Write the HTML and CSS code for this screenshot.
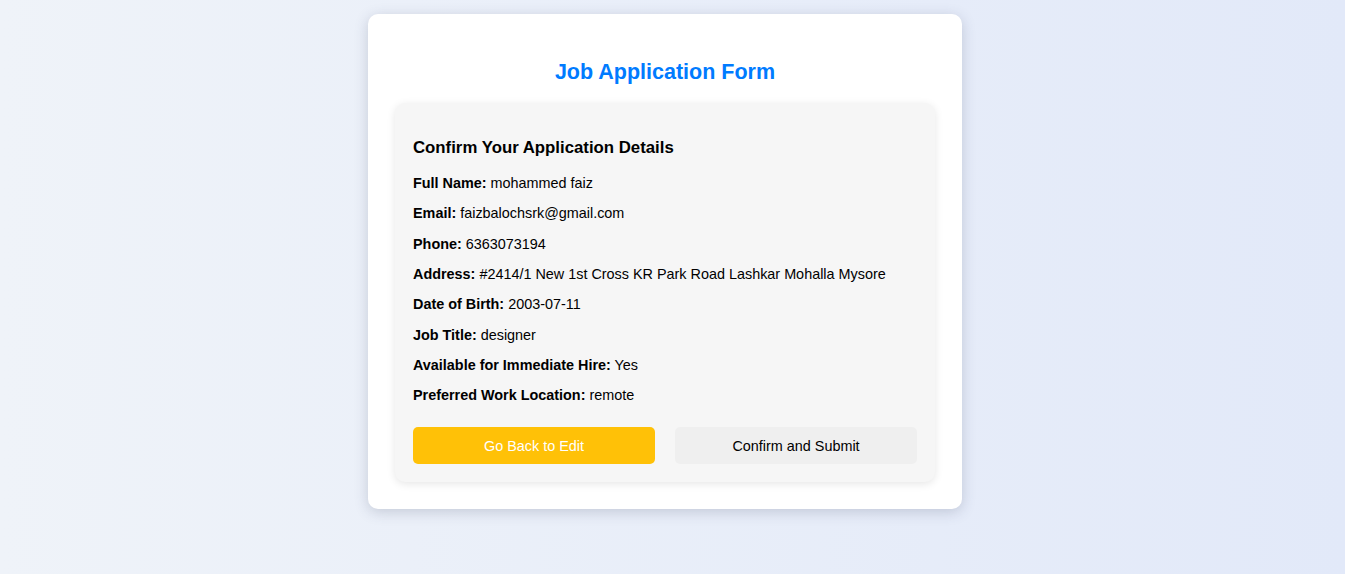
FILE: index.html
```html
<!DOCTYPE html>
<html lang="en">
<head>
<meta charset="utf-8">
<title>Job Application Form</title>
<link rel="stylesheet" href="styles.css">
</head>
<body>
  <main class="page">
    <div class="card">
      <h2 class="title">Job Application Form</h2>
      <section class="confirm">
        <h3 class="confirm-title">Confirm Your Application Details</h3>
        <p class="row"><strong>Full Name:</strong> mohammed faiz</p>
        <p class="row"><strong>Email:</strong> faizbalochsrk@gmail.com</p>
        <p class="row"><strong>Phone:</strong> 6363073194</p>
        <p class="row"><strong>Address:</strong> #2414/1 New 1st Cross KR Park Road Lashkar Mohalla Mysore</p>
        <p class="row"><strong>Date of Birth:</strong> 2003-07-11</p>
        <p class="row"><strong>Job Title:</strong> designer</p>
        <p class="row"><strong>Available for Immediate Hire:</strong> Yes</p>
        <p class="row"><strong>Preferred Work Location:</strong> remote</p>
        <div class="actions">
          <button class="btn btn-back" type="button">Go Back to Edit</button>
          <button class="btn btn-submit" type="button">Confirm and Submit</button>
        </div>
      </section>
    </div>
  </main>
</body>
</html>
```
FILE: styles.css
```css
html, body {
  margin: 0;
  padding: 0;
  height: 100%;
}

body {
  font-family: "Liberation Sans", Arial, sans-serif;
  font-size: 14.4px;
  color: #000;
  background: linear-gradient(90deg, #eff3f9 0%, #e2e9f9 100%);
}

.page {
  display: flex;
  justify-content: center;
  align-items: flex-start;
  padding: 14px 15px 0 0;
}

.card {
  width: 594px;
  box-sizing: border-box;
  padding: 27px;
  background: #fff;
  border-radius: 10px;
  box-shadow: 0 3px 14px rgba(60, 70, 100, 0.22);
}

.title {
  margin: 19px 0 18px;
  text-align: center;
  color: #007bff;
  font-size: 21.5px;
  font-weight: bold;
  line-height: 25px;
}

.confirm {
  background: #f6f6f6;
  border-radius: 10px;
  padding: 18px;
  box-shadow: 0 2px 9px rgba(0, 0, 0, 0.1);
}

.confirm-title {
  margin: 17px 0 15px;
  font-size: 16.8px;
  line-height: 19px;
  font-weight: bold;
}

.row {
  margin: 0 0 7.35px;
  line-height: 23px;
}

.row strong {
  font-weight: bold;
}

.actions {
  display: flex;
  gap: 20px;
  margin-top: 20px;
}

.btn {
  flex: 1;
  height: 37px;
  border: none;
  border-radius: 5px;
  font-family: "Liberation Sans", Arial, sans-serif;
  font-size: 14.4px;
  cursor: pointer;
}

.btn-back {
  background: #ffc107;
  color: #fff;
}

.btn-submit {
  background: #efefef;
  color: #000;
}
```
